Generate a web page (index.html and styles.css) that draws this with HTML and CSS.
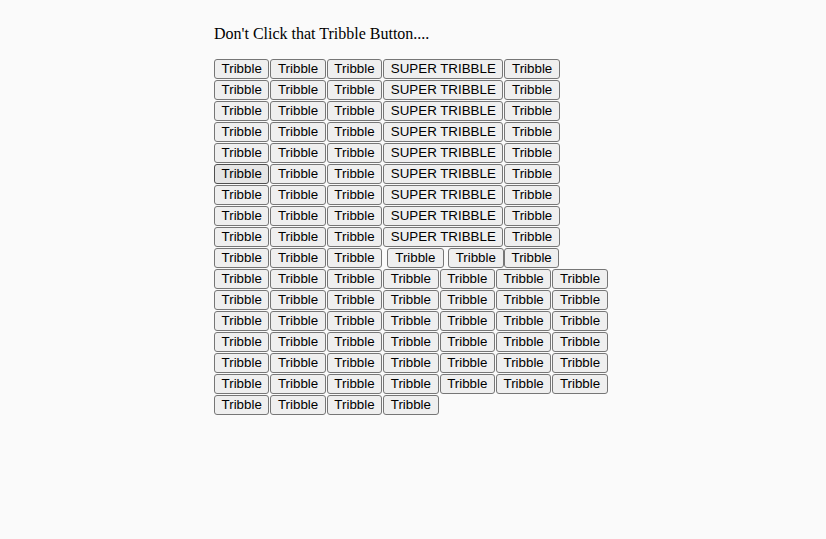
FILE: index.html
```html
<!DOCTYPE html>
<html>
<head>
<meta charset="utf-8">
<link rel="stylesheet" href="styles.css">
</head>
<body>
<div class="wrap">
  <p class="title">Don't Click that Tribble Button....</p>
  <div class="grid">
    <div class="row"><button class="btn">Tribble</button><button class="btn">Tribble</button><button class="btn">Tribble</button><button class="btn super">SUPER TRIBBLE</button><button class="btn">Tribble</button></div>
    <div class="row"><button class="btn">Tribble</button><button class="btn">Tribble</button><button class="btn">Tribble</button><button class="btn super">SUPER TRIBBLE</button><button class="btn">Tribble</button></div>
    <div class="row"><button class="btn">Tribble</button><button class="btn">Tribble</button><button class="btn">Tribble</button><button class="btn super">SUPER TRIBBLE</button><button class="btn">Tribble</button></div>
    <div class="row"><button class="btn">Tribble</button><button class="btn">Tribble</button><button class="btn">Tribble</button><button class="btn super">SUPER TRIBBLE</button><button class="btn">Tribble</button></div>
    <div class="row"><button class="btn">Tribble</button><button class="btn">Tribble</button><button class="btn">Tribble</button><button class="btn super">SUPER TRIBBLE</button><button class="btn">Tribble</button></div>
    <div class="row"><button class="btn hover">Tribble</button><button class="btn">Tribble</button><button class="btn">Tribble</button><button class="btn super">SUPER TRIBBLE</button><button class="btn">Tribble</button></div>
    <div class="row"><button class="btn">Tribble</button><button class="btn">Tribble</button><button class="btn">Tribble</button><button class="btn super">SUPER TRIBBLE</button><button class="btn">Tribble</button></div>
    <div class="row"><button class="btn">Tribble</button><button class="btn">Tribble</button><button class="btn">Tribble</button><button class="btn super">SUPER TRIBBLE</button><button class="btn">Tribble</button></div>
    <div class="row"><button class="btn">Tribble</button><button class="btn">Tribble</button><button class="btn">Tribble</button><button class="btn super">SUPER TRIBBLE</button><button class="btn">Tribble</button></div>
    <div class="row"><button class="btn">Tribble</button><button class="btn">Tribble</button><button class="btn">Tribble</button><button class="btn spaced">Tribble</button><button class="btn spaced">Tribble</button><button class="btn">Tribble</button></div>
    <div class="row"><button class="btn">Tribble</button><button class="btn">Tribble</button><button class="btn">Tribble</button><button class="btn">Tribble</button><button class="btn">Tribble</button><button class="btn">Tribble</button><button class="btn">Tribble</button></div>
    <div class="row"><button class="btn">Tribble</button><button class="btn">Tribble</button><button class="btn">Tribble</button><button class="btn">Tribble</button><button class="btn">Tribble</button><button class="btn">Tribble</button><button class="btn">Tribble</button></div>
    <div class="row"><button class="btn">Tribble</button><button class="btn">Tribble</button><button class="btn">Tribble</button><button class="btn">Tribble</button><button class="btn">Tribble</button><button class="btn">Tribble</button><button class="btn">Tribble</button></div>
    <div class="row"><button class="btn">Tribble</button><button class="btn">Tribble</button><button class="btn">Tribble</button><button class="btn">Tribble</button><button class="btn">Tribble</button><button class="btn">Tribble</button><button class="btn">Tribble</button></div>
    <div class="row"><button class="btn">Tribble</button><button class="btn">Tribble</button><button class="btn">Tribble</button><button class="btn">Tribble</button><button class="btn">Tribble</button><button class="btn">Tribble</button><button class="btn">Tribble</button></div>
    <div class="row"><button class="btn">Tribble</button><button class="btn">Tribble</button><button class="btn">Tribble</button><button class="btn">Tribble</button><button class="btn">Tribble</button><button class="btn">Tribble</button><button class="btn">Tribble</button></div>
    <div class="row"><button class="btn">Tribble</button><button class="btn">Tribble</button><button class="btn">Tribble</button><button class="btn">Tribble</button></div>
  </div>
</div>
</body>
</html>
```
FILE: styles.css
```css
html {
  background: #fafafa;
}
body {
  margin: 8px;
  background: #fafafa;
  font-family: "Liberation Serif", "Times New Roman", serif;
  font-size: 16px;
  color: #000;
}
.wrap {
  padding-left: 206px;
  padding-top: 1px;
}
.title {
  margin: 16px 0;
  line-height: 18px;
}
.grid {
  display: flex;
  flex-direction: column;
}
.row {
  display: flex;
  height: 21px;
}
.btn {
  flex: none;
  box-sizing: border-box;
  width: 55.4px;
  height: 20px;
  margin: 0 1px 1px 0;
  padding: 0;
  border: 1px solid #767676;
  border-radius: 3px;
  background: #efefef;
  color: #000;
  font-family: "Liberation Sans", Arial, sans-serif;
  font-size: 13.33px;
  line-height: 18px;
  text-align: center;
}
.btn.super {
  width: 120.3px;
}
.btn.spaced {
  width: 56.4px;
  margin-left: 4px;
  margin-right: 0;
}
.btn.hover {
  background: #e5e5e5;
  border-color: #4f4f4f;
}
```
